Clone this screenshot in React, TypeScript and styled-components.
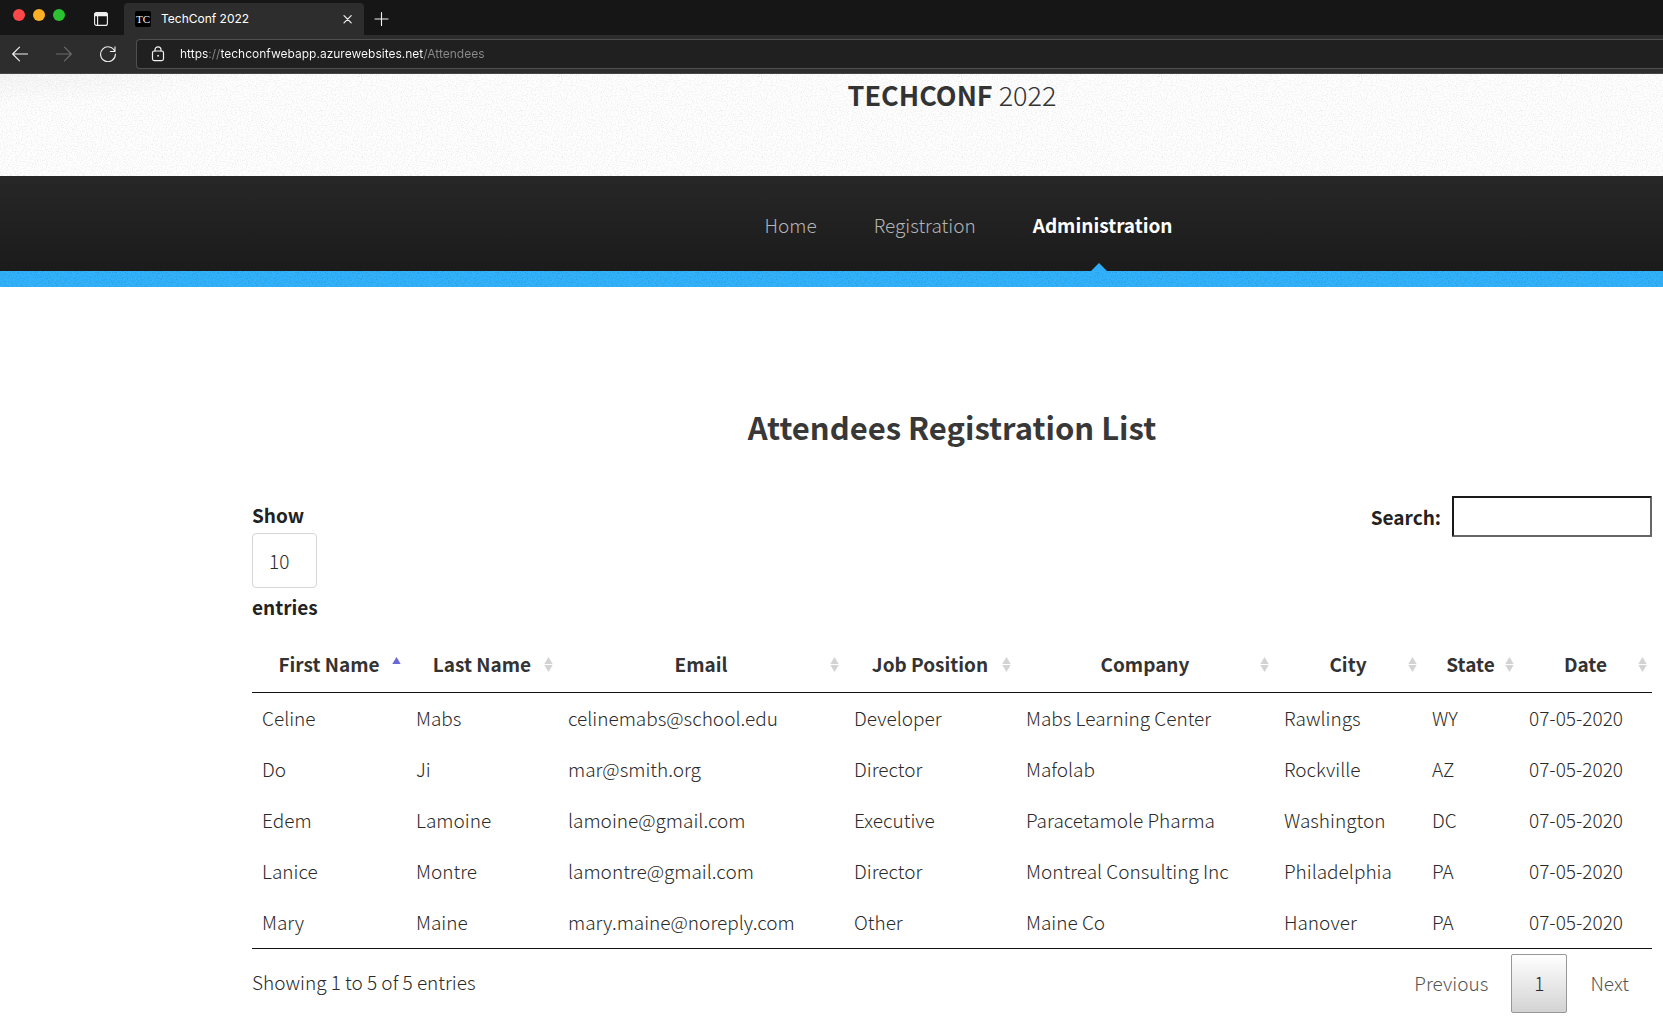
import React, { useState } from "react";
import styled, { createGlobalStyle, css } from "styled-components";

const siteFont = `"Noto Sans CJK SC", "Open Sans", sans-serif`;
const uiFont = `Inter, "Liberation Sans", sans-serif`;

const GlobalStyle = createGlobalStyle`
  *, *::before, *::after { box-sizing: border-box; }
  body {
    margin: 0;
    background: #fff;
    color: #2a2a2a;
    font-family: ${siteFont};
    font-size: 19px;
    font-weight: 300;
    line-height: 32px;
    overflow-x: hidden;
  }
  button, input, select { font: inherit; color: inherit; }
`;

/* ---------- browser window ---------- */

const TabStrip = styled.div`
  display: flex;
  align-items: flex-end;
  height: 35px;
  padding-left: 13px;
  background: #161616;
  font-family: ${uiFont};
`;

const WindowButtons = styled.div`
  display: flex;
  gap: 8px;
  height: 35px;
  padding-top: 9px;
`;

const WindowButton = styled.button<{ $color: string }>`
  width: 12px;
  height: 12px;
  padding: 0;
  border: 0;
  border-radius: 50%;
  background: ${(p) => p.$color};
`;

const IconButton = styled.button<{ $dim?: boolean }>`
  display: flex;
  align-items: center;
  justify-content: center;
  flex: none;
  width: 16px;
  height: 16px;
  padding: 0;
  border: 0;
  background: none;
  color: ${(p) => (p.$dim ? "#6c6c6c" : "#f2f2f2")};
`;

const TabActions = styled.div`
  display: flex;
  align-items: center;
  height: 32px;
  padding: 0 15px 0 28px;
`;

const Tab = styled.div`
  display: flex;
  align-items: center;
  width: 240px;
  height: 32px;
  padding: 0 8px 0 11px;
  border-radius: 4px 4px 0 0;
  background: #2d2d2d;
  color: #fff;
  font-size: 12px;
  font-weight: 400;
  line-height: 16px;
`;

const Favicon = styled.span`
  width: 16px;
  height: 16px;
  margin-right: 10px;
  border-radius: 2px;
  background: #000;
  color: #eee;
  font-family: "Liberation Serif", serif;
  font-size: 11px;
  font-weight: 400;
  text-align: center;
`;

const TabTitle = styled.span`
  flex: 1;
`;

const NewTab = styled.div`
  display: flex;
  align-items: center;
  height: 32px;
  padding-left: 10px;
`;

const Toolbar = styled.div`
  display: flex;
  align-items: center;
  height: 39px;
  padding-left: 12px;
  border-bottom: 1px solid #454545;
  background: #2d2d2d;
`;

const ToolbarButtons = styled.div`
  display: flex;
  gap: 28px;
  padding-right: 20px;
`;

const AddressBar = styled.label`
  display: flex;
  align-items: center;
  flex: 1;
  gap: 14px;
  height: 30px;
  padding-left: 13px;
  border: 1px solid #4f4f4f;
  border-right: 0;
  border-radius: 4px 0 0 4px;
  background: #202020;
  color: #f2f2f2;
`;

/* Scheme and host are bright, separators and path are dimmed. */
const AddressInput = styled.input`
  flex: 1;
  height: 28px;
  padding: 0;
  border: 0;
  outline: 0;
  background: linear-gradient(
    to right,
    #fff 29px,
    #8a8a8a 29px 41px,
    #fff 41px 243px,
    #8a8a8a 243px
  );
  background-clip: text;
  -webkit-text-fill-color: transparent;
  font-family: ${uiFont};
  font-size: 12px;
  font-weight: 400;
`;

const Glyph = ({ size = 16, children }: { size?: number; children: React.ReactNode }) => (
  <svg
    width={size}
    height={size}
    viewBox={`0 0 ${size} ${size}`}
    fill="none"
    stroke="currentColor"
    strokeWidth="1.1"
    strokeLinecap="round"
    strokeLinejoin="round"
    aria-hidden="true"
  >
    {children}
  </svg>
);

function BrowserChrome() {
  return (
    <header>
      <TabStrip>
        <WindowButtons>
          <WindowButton $color="#fc4848" aria-label="Close window" />
          <WindowButton $color="#fdb025" aria-label="Minimize window" />
          <WindowButton $color="#2bc231" aria-label="Zoom window" />
        </WindowButtons>
        <TabActions>
          <IconButton aria-label="Tab actions">
            <Glyph>
              <rect x="1.6" y="1.6" width="12.8" height="12.8" rx="2" />
              <path d="M2 2.2h12v2.4H2z" fill="currentColor" />
              <path d="M4.6 4.8v9.4" />
            </Glyph>
          </IconButton>
        </TabActions>
        <Tab>
          <Favicon aria-hidden="true">TC</Favicon>
          <TabTitle>TechConf 2022</TabTitle>
          <IconButton aria-label="Close tab">
            <Glyph>
              <path d="M4 4.7l7.2 7.2M11.2 4.7L4 11.9" strokeWidth="1.2" />
            </Glyph>
          </IconButton>
        </Tab>
        <NewTab>
          <IconButton aria-label="New tab">
            <Glyph>
              <path d="M7.5 1.5v13M1 8h13" />
            </Glyph>
          </IconButton>
        </NewTab>
      </TabStrip>
      <Toolbar>
        <ToolbarButtons>
          <IconButton aria-label="Back">
            <Glyph>
              <path d="M15.5 8H.8M7.5 1.2L.7 8l6.8 6.8" />
            </Glyph>
          </IconButton>
          <IconButton $dim aria-label="Forward">
            <Glyph>
              <path d="M.5 8h14.7M8.5 1.2L15.3 8l-6.8 6.8" />
            </Glyph>
          </IconButton>
          <IconButton aria-label="Refresh">
            <Glyph>
              <path d="M14.8 5.3A7.4 7.4 0 1 0 15.4 8M15 .9v4.6h-4.6" />
            </Glyph>
          </IconButton>
        </ToolbarButtons>
        <AddressBar>
          <Glyph>
            <rect x="2.5" y="5" width="11" height="9.6" rx="1.8" strokeWidth="1.2" />
            <path d="M5 5V3.8a3 3 0 0 1 6 0V5" strokeWidth="1.2" />
            <circle cx="8" cy="9.8" r="0.6" fill="currentColor" strokeWidth="0.6" />
          </Glyph>
          <AddressInput
            aria-label="Address"
            spellCheck={false}
            defaultValue="https://techconfwebapp.azurewebsites.net/Attendees"
          />
        </AddressBar>
      </Toolbar>
    </header>
  );
}

/* ---------- site header ---------- */

const gutters = css`
  padding-left: 252px;
  padding-right: 11px;
`;

const grain = (strength: number) => {
  const svg = `<svg xmlns='http://www.w3.org/2000/svg' width='200' height='200'><filter id='n' x='0' y='0' width='100%' height='100%'><feTurbulence type='fractalNoise' baseFrequency='0.8' numOctaves='2' stitchTiles='stitch'/><feColorMatrix values='0 0 0 0 0 0 0 0 0 0 0 0 0 0 0 ${strength} 0 0 0 -${strength * 0.42}'/></filter><rect width='200' height='200' filter='url(#n)'/></svg>`;
  return `url("data:image/svg+xml,${encodeURIComponent(svg).replace(/'/g, "%27")}")`;
};

const Masthead = styled.div`
  ${gutters}
  height: 102px;
  padding-top: 2px;
  background: ${grain(0.18)}, radial-gradient(240px 30px at 0 0, #f6f6f6, #fff);
  text-align: center;
`;

const SiteTitle = styled.h1`
  margin: 0;
  color: #333;
  font-size: 27px;
  font-weight: 300;
  line-height: 38px;

  strong {
    font-weight: 700;
  }
`;

const NavBar = styled.nav`
  ${gutters}
  height: 95px;
  background: linear-gradient(#272727, #1b1b1b);
`;

const AccentBar = styled.div`
  height: 16px;
  background: ${grain(0.3)}, #32b3fd;
`;

const NavList = styled.ul`
  display: flex;
  justify-content: center;
  gap: 57px;
  margin: 0;
  padding: 0 0 0 33px;
  list-style: none;
`;

const NavLink = styled.a<{ $current?: boolean }>`
  position: relative;
  display: block;
  height: 95px;
  color: ${(p) => (p.$current ? "#fff" : "#b4b4b4")};
  font-weight: ${(p) => (p.$current ? 700 : 300)};
  line-height: 98px;
  text-decoration: none;

  ${(p) =>
    p.$current &&
    css`
      &::after {
        content: "";
        position: absolute;
        bottom: 0;
        left: 50%;
        margin-left: -12px;
        border: 8px solid transparent;
        border-top: 0;
        border-bottom-color: #30adf7;
      }
    `}
`;

/* ---------- attendees ---------- */

const Main = styled.main`
  ${gutters}
  padding-top: 115px;
`;

const PageTitle = styled.h2`
  margin: 0 0 44px;
  color: #383838;
  font-size: 31px;
  font-weight: 700;
  line-height: 50px;
  text-align: center;
`;

const Controls = styled.div`
  display: flex;
  justify-content: space-between;
  align-items: flex-start;
  color: #222;
  font-weight: 700;
`;

const LengthLabel = styled.label`
  display: flex;
  flex-direction: column;
  align-items: flex-start;
  line-height: 37px;
`;

const LengthSelect = styled.select`
  appearance: none;
  width: 65px;
  height: 55px;
  padding: 0 16px;
  border: 1px solid #d6d6d6;
  border-radius: 4px;
  background: #fff;
  color: #2a2a2a;
  font-weight: 300;
`;

const SearchLabel = styled.label`
  display: flex;
  align-items: center;
  gap: 11px;
`;

const SearchInput = styled.input`
  width: 200px;
  height: 41px;
  padding: 0 8px;
  border: 2px solid;
  border-color: #1a1a1a #666 #666 #1a1a1a;
  border-radius: 1px;
  background: #fff;
  outline: 0;
  font-weight: 300;
`;

const Table = styled.table`
  width: 100%;
  margin-top: 11px;
  border-collapse: separate;
  border-spacing: 0;
  border-bottom: 1px solid #111;
  table-layout: fixed;
`;

const HeadCell = styled.th`
  position: relative;
  height: 57px;
  padding: 0;
  border-bottom: 1px solid #111;
`;

const SortButton = styled.button`
  width: 100%;
  padding: 0;
  border: 0;
  background: none;
  color: #333;
  font-weight: 700;
`;

const SortMark = styled.svg`
  position: absolute;
  top: 19px;
  right: 4px;
`;

const Cell = styled.td`
  height: 51px;
  padding: 0 10px 1px;
  white-space: nowrap;
`;

const Footer = styled.div`
  display: flex;
  justify-content: space-between;
  align-items: flex-start;
  padding: 5px 0 6px;
`;

const Info = styled.div`
  padding-top: 12px;
`;

const Pager = styled.nav`
  display: flex;
`;

const PageButton = styled.button<{ $current?: boolean }>`
  min-width: 55px;
  height: 59px;
  padding: 0 22px 2px;
  border: 1px solid ${(p) => (p.$current ? "#979797" : "transparent")};
  border-radius: 2px;
  background: ${(p) => (p.$current ? "linear-gradient(#fff, #d3d3d3)" : "none")};
  color: ${(p) => (p.$current ? "#2a2a2a" : "#555")};
`;

const columns = [
  { title: "First Name", width: 154 },
  { title: "Last Name", width: 152 },
  { title: "Email", width: 286 },
  { title: "Job Position", width: 172 },
  { title: "Company", width: 258 },
  { title: "City", width: 148 },
  { title: "State", width: 97 },
  { title: "Date", width: 133 },
];

const attendees = [
  ["Celine", "Mabs", "celinemabs@school.edu", "Developer", "Mabs Learning Center", "Rawlings", "WY", "07-05-2020"],
  ["Do", "Ji", "mar@smith.org", "Director", "Mafolab", "Rockville", "AZ", "07-05-2020"],
  ["Edem", "Lamoine", "lamoine@gmail.com", "Executive", "Paracetamole Pharma", "Washington", "DC", "07-05-2020"],
  ["Lanice", "Montre", "lamontre@gmail.com", "Director", "Montreal Consulting Inc", "Philadelphia", "PA", "07-05-2020"],
  ["Mary", "Maine", "mary.maine@noreply.com", "Other", "Maine Co", "Hanover", "PA", "07-05-2020"],
];

export default function App() {
  const [sort, setSort] = useState({ column: 0, ascending: true });
  const [query, setQuery] = useState("");

  const rows = attendees
    .filter((row) => row.join(" ").toLowerCase().includes(query.toLowerCase()))
    .sort((a, b) => a[sort.column].localeCompare(b[sort.column]) * (sort.ascending ? 1 : -1));

  const sortBy = (column: number) =>
    setSort({ column, ascending: sort.column === column ? !sort.ascending : true });

  return (
    <>
      <GlobalStyle />
      <BrowserChrome />
      <Masthead>
        <SiteTitle>
          <strong>TECHCONF</strong> 2022
        </SiteTitle>
      </Masthead>
      <NavBar aria-label="Site">
        <NavList>
          <li><NavLink href="#home">Home</NavLink></li>
          <li><NavLink href="#registration">Registration</NavLink></li>
          <li><NavLink href="#administration" $current aria-current="page">Administration</NavLink></li>
        </NavList>
      </NavBar>
      <AccentBar />
      <Main>
        <PageTitle>Attendees Registration List</PageTitle>
        <Controls>
          <LengthLabel>
            Show
            <LengthSelect defaultValue="10">
              <option>10</option>
              <option>25</option>
              <option>50</option>
            </LengthSelect>
            entries
          </LengthLabel>
          <SearchLabel>
            Search:
            <SearchInput type="search" value={query} onChange={(e) => setQuery(e.target.value)} />
          </SearchLabel>
        </Controls>
        <Table>
          <colgroup>
            {columns.map((c) => (
              <col key={c.title} style={{ width: `${c.width / 14}%` }} />
            ))}
          </colgroup>
          <thead>
            <tr>
              {columns.map((c, i) => {
                const active = sort.column === i;
                return (
                  <HeadCell
                    key={c.title}
                    scope="col"
                    aria-sort={active ? (sort.ascending ? "ascending" : "descending") : "none"}
                  >
                    <SortButton onClick={() => sortBy(i)}>{c.title}</SortButton>
                    <SortMark width="11" height="19" viewBox="0 0 11 19" aria-hidden="true">
                      {(!active || sort.ascending) && (
                        <path d="M5.5 2L9.7 9H1.3z" fill={active ? "#6868d8" : "#d3d3d3"} />
                      )}
                      {(!active || !sort.ascending) && (
                        <path d="M5.5 17L9.7 10H1.3z" fill={active ? "#6868d8" : "#d3d3d3"} />
                      )}
                    </SortMark>
                  </HeadCell>
                );
              })}
            </tr>
          </thead>
          <tbody>
            {rows.map((row) => (
              <tr key={row[2]}>
                {row.map((value, i) => (
                  <Cell key={columns[i].title}>{value}</Cell>
                ))}
              </tr>
            ))}
          </tbody>
        </Table>
        <Footer>
          <Info>Showing 1 to 5 of 5 entries</Info>
          <Pager aria-label="Pages">
            <PageButton>Previous</PageButton>
            <PageButton $current aria-current="page">1</PageButton>
            <PageButton>Next</PageButton>
          </Pager>
        </Footer>
      </Main>
    </>
  );
}
